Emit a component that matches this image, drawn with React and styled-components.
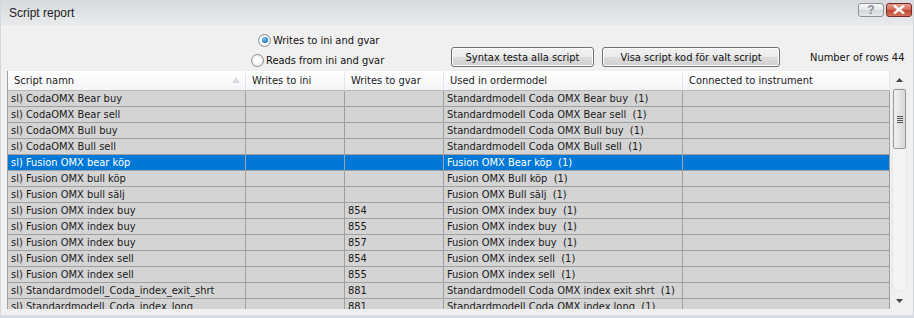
import React from 'react'
import styled, { createGlobalStyle } from 'styled-components'

const GlobalStyle = createGlobalStyle`
  body {
    margin: 0;
    background: #f0f0f0;
    font-family: "DejaVu Sans Condensed", "Liberation Sans", sans-serif;
  }
`;

const Window = styled.div`
  width: 914px;
  height: 318px;
  display: flex;
  flex-direction: column;
  background: #f0f0f0;
  box-sizing: border-box;
  border-left: 1px solid #d4d7db;
  border-right: 1px solid #d4d7db;
  border-bottom: 3px solid #d6dde4;
  overflow: hidden;
`;

const TitleBar = styled.div`
  height: 25px;
  flex-shrink: 0;
  display: flex;
  align-items: center;
  padding-left: 8px;
  background: linear-gradient(#d8dadd, #e8eaec);
`;

const Title = styled.div`
  flex: 1;
  font-family: "Liberation Sans", sans-serif;
  font-size: 12px;
  color: #222;
`;

const CaptionButton = styled.div`
  width: 26px;
  height: 14px;
  margin-top: -6px;
  margin-left: 2px;
  border-radius: 3px;
  display: flex;
  align-items: center;
  justify-content: center;
  box-sizing: border-box;
  border: 1px solid ${p => (p.close ? '#7b2a2a' : '#8d9299')};
  background: ${p =>
    p.close
      ? 'linear-gradient(#e6a191 0%, #d3705c 45%, #c2432e 55%, #d6775d 100%)'
      : 'linear-gradient(#f7f8f9 0%, #e6e8ea 45%, #d4d7db 55%, #e7e9eb 100%)'};
  color: ${p => (p.close ? '#fff' : '#8a8f95')};
  font-family: "Liberation Sans", sans-serif;
  font-weight: bold;
  font-size: 12px;
  line-height: 1;
  &:last-child {
    margin-right: 1px;
  }
`;

const Content = styled.div`
  flex: 1;
  display: flex;
  flex-direction: column;
  padding: 0 5px 6px 6px;
  min-height: 0;
`;

const Toolbar = styled.div`
  height: 46px;
  flex-shrink: 0;
  display: flex;
  align-items: flex-start;
  padding-left: 244px;
  box-sizing: border-box;
  font-size: 11px;
  color: #111;
`;

const RadioGroup = styled.div`
  display: flex;
  flex-direction: column;
  padding-top: 8px;
  gap: 6px;
  width: 200px;
  flex-shrink: 0;
`;

const RadioRow = styled.label`
  display: flex;
  align-items: center;
  gap: 2px;
  height: 14px;
  margin-left: ${p => p.indent || 0}px;
`;

const RadioDot = styled.span`
  width: 11px;
  height: 11px;
  border-radius: 50%;
  border: 1px solid #8a8e93;
  background: radial-gradient(circle, #ffffff 30%, #dcdee1 100%);
  display: flex;
  align-items: center;
  justify-content: center;
  &::after {
    content: '';
    display: ${p => (p.checked ? 'block' : 'none')};
    width: 6px;
    height: 6px;
    border-radius: 50%;
    background: radial-gradient(circle at 40% 35%, #7ed0f7, #1b6fb5 70%, #0d4d8a);
  }
`;

const ButtonRow = styled.div`
  display: flex;
  align-items: center;
  gap: 8px;
  padding-top: 22px;
  white-space: nowrap;
`;

const PushButton = styled.button`
  width: ${p => p.w}px;
  height: 20px;
  padding: 0;
  flex-shrink: 0;
  font-family: inherit;
  font-size: 11px;
  color: #111;
  border: 1px solid #707070;
  border-radius: 3px;
  background: linear-gradient(#f2f2f2 0%, #ebebeb 50%, #dddddd 51%, #cfcfcf 100%);
  box-shadow: inset 0 0 0 1px #fcfcfc;
`;

const RowCount = styled.div`
  margin-left: 22px;
  flex-shrink: 0;
  font-size: 11px;
  color: #111;
`;

const TableArea = styled.div`
  flex: 1;
  display: flex;
  min-height: 0;
`;

const Grid = styled.div`
  width: 883px;
  overflow: hidden;
  display: grid;
  grid-template-columns: 238px 99px 99px 239px 207px;
  grid-template-rows: 20px;
  grid-auto-rows: 16px;
  align-content: start;
  border-left: 1px solid #a0a0a0;
  font-size: 11px;
`;

const HeaderCell = styled.div`
  box-sizing: border-box;
  padding-left: 6px;
  display: flex;
  align-items: center;
  position: relative;
  background: linear-gradient(#ffffff, #f4f5f7);
  border-right: 1px solid #e3e5e8;
  border-bottom: 1px solid #b8b8b8;
  color: #1a1a1a;
`;

const SortArrow = styled.span`
  position: absolute;
  right: 5px;
  top: 6px;
  width: 0;
  height: 0;
  border-left: 4px solid transparent;
  border-right: 4px solid transparent;
  border-bottom: 6px solid #d8dadd;
`;

const Cell = styled.div`
  box-sizing: border-box;
  padding-left: 3px;
  display: flex;
  align-items: center;
  white-space: pre;
  overflow: hidden;
  border-right: 1px solid #a0a0a0;
  border-bottom: 1px solid #a0a0a0;
  background: ${p => (p.selected ? '#0078d7' : '#d4d4d4')};
  color: ${p => (p.selected ? '#ffffff' : '#1a1a1a')};
`;

const ScrollBar = styled.div`
  width: 17px;
  display: flex;
  flex-direction: column;
  align-items: center;
  background: #f0f0f0;
`;

const ArrowBox = styled.div`
  width: 15px;
  height: 17px;
  display: flex;
  align-items: center;
  justify-content: center;
  flex-shrink: 0;
`;

const Track = styled.div`
  flex: 1;
  width: 15px;
  border: 1px solid #e8e8e8;
  box-sizing: border-box;
  background: #f4f4f4;
  margin-bottom: 1px;
`;

const Thumb = styled.div`
  width: 13px;
  height: 60px;
  box-sizing: border-box;
  border: 1px solid #9a9a9a;
  border-radius: 2px;
  background: linear-gradient(90deg, #f0f0f0, #e2e2e2 60%, #d6d6d6);
  display: flex;
  flex-direction: column;
  align-items: center;
  justify-content: center;
  gap: 1px;
`;

const Grip = styled.span`
  width: 6px;
  height: 1px;
  background: #555;
`;

const columns = ['Script namn', 'Writes to ini', 'Writes to gvar', 'Used in ordermodel', 'Connected to instrument'];

const rows = [
  ['sl) CodaOMX Bear buy', '', '', 'Standardmodell Coda OMX Bear buy  (1)'],
  ['sl) CodaOMX Bear sell', '', '', 'Standardmodell Coda OMX Bear sell  (1)'],
  ['sl) CodaOMX Bull buy', '', '', 'Standardmodell Coda OMX Bull buy  (1)'],
  ['sl) CodaOMX Bull sell', '', '', 'Standardmodell Coda OMX Bull sell  (1)'],
  ['sl) Fusion OMX bear köp', '', '', 'Fusion OMX Bear köp  (1)'],
  ['sl) Fusion OMX bull köp', '', '', 'Fusion OMX Bull köp  (1)'],
  ['sl) Fusion OMX bull sälj', '', '', 'Fusion OMX Bull sälj  (1)'],
  ['sl) Fusion OMX index buy', '', '854', 'Fusion OMX index buy  (1)'],
  ['sl) Fusion OMX index buy', '', '855', 'Fusion OMX index buy  (1)'],
  ['sl) Fusion OMX index buy', '', '857', 'Fusion OMX index buy  (1)'],
  ['sl) Fusion OMX index sell', '', '854', 'Fusion OMX index sell  (1)'],
  ['sl) Fusion OMX index sell', '', '855', 'Fusion OMX index sell  (1)'],
  ['sl) Standardmodell_Coda_index_exit_shrt', '', '881', 'Standardmodell Coda OMX index exit shrt  (1)'],
  ['sl) Standardmodell_Coda_index_long', '', '881', 'Standardmodell Coda OMX index long  (1)'],
];

const selectedRow = 4;

export default function App() {
  return (
    <>
      <GlobalStyle />
      <Window>
        <TitleBar>
          <Title>Script report</Title>
          <CaptionButton>?</CaptionButton>
          <CaptionButton close>
            <svg width="12" height="9" viewBox="0 0 12 9">
              <path d="M1 0.5 L11 8.5 M11 0.5 L1 8.5" stroke="#fff" strokeWidth="2.4" />
            </svg>
          </CaptionButton>
        </TitleBar>
        <Content>
          <Toolbar>
            <RadioGroup>
              <RadioRow indent={7}>
                <RadioDot checked />
                Writes to ini and gvar
              </RadioRow>
              <RadioRow>
                <RadioDot />
                Reads from ini and gvar
              </RadioRow>
            </RadioGroup>
            <ButtonRow>
              <PushButton w={143}>Syntax testa alla script</PushButton>
              <PushButton w={178}>Visa script kod för valt script</PushButton>
              <RowCount>Number of rows 44</RowCount>
            </ButtonRow>
          </Toolbar>
          <TableArea>
            <Grid>
              {columns.map((c, i) => (
                <HeaderCell key={c}>
                  {c}
                  {i === 0 && <SortArrow />}
                </HeaderCell>
              ))}
              {rows.map((r, ri) =>
                [...r, ''].map((v, ci) => (
                  <Cell key={ri + '-' + ci} selected={ri === selectedRow}>
                    {v}
                  </Cell>
                ))
              )}
            </Grid>
            <ScrollBar>
              <ArrowBox>
                <svg width="7" height="4" viewBox="0 0 7 4">
                  <path d="M0 4 L3.5 0 L7 4 Z" fill="#444" />
                </svg>
              </ArrowBox>
              <Track>
                <Thumb>
                  <Grip />
                  <Grip />
                  <Grip />
                  <Grip />
                </Thumb>
              </Track>
              <ArrowBox>
                <svg width="7" height="4" viewBox="0 0 7 4">
                  <path d="M0 0 L7 0 L3.5 4 Z" fill="#444" />
                </svg>
              </ArrowBox>
            </ScrollBar>
          </TableArea>
        </Content>
      </Window>
    </>
  )
}
